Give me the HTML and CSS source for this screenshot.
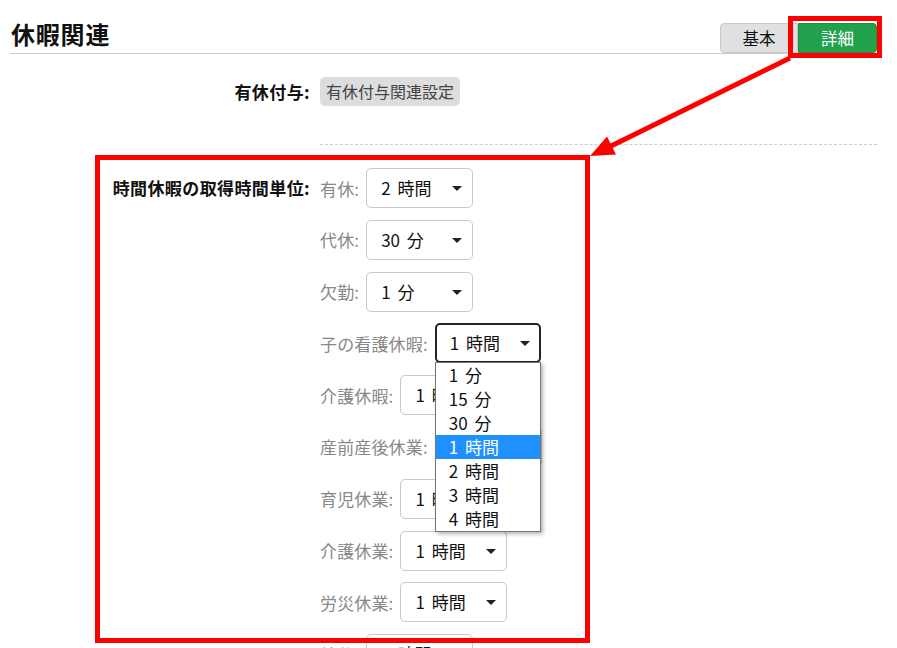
FILE: index.html
```html
<!DOCTYPE html>
<html>
	<head>
		<meta charset="UTF-8">
		<title>休暇関連</title>
		<link rel="stylesheet" href="styles.css">
	</head>
	<body>
	  <div class="page">
	    <div class="head">
	      <h1 class="title">休暇関連</h1>
	      <div class="tabs">
	        <span class="tab">基本</span>
	        <span class="tab on">詳細</span>
	      </div>
	    </div>

	    <div class="row first">
	      <div class="lbl">有休付与:</div>
	      <div class="cell"><span class="gbtn">有休付与関連設定</span></div>
	    </div>
	    <div class="sep"></div>

	    <div class="row">
	      <div class="lbl">時間休暇の取得時間単位:</div>
	      <div class="cell units">
	        <div class="unit"><span class="ulbl">有休:</span><div class="sel">2 時間</div></div>
	        <div class="unit"><span class="ulbl">代休:</span><div class="sel">30 分</div></div>
	        <div class="unit"><span class="ulbl">欠勤:</span><div class="sel">1 分</div></div>
	        <div class="unit">
	          <span class="ulbl">子の看護休暇:</span>
	          <div class="sel focus">1 時間
	            <ul class="drop">
	              <li>1 分</li>
	              <li>15 分</li>
	              <li>30 分</li>
	              <li class="on">1 時間</li>
	              <li>2 時間</li>
	              <li>3 時間</li>
	              <li>4 時間</li>
	            </ul>
	          </div>
	        </div>
	        <div class="unit"><span class="ulbl">介護休暇:</span><div class="sel">1 時間</div></div>
	        <div class="unit"><span class="ulbl">産前産後休業:</span><div class="sel">1 時間</div></div>
	        <div class="unit"><span class="ulbl">育児休業:</span><div class="sel">1 時間</div></div>
	        <div class="unit"><span class="ulbl">介護休業:</span><div class="sel">1 時間</div></div>
	        <div class="unit"><span class="ulbl">労災休業:</span><div class="sel">1 時間</div></div>
	        <div class="unit"><span class="ulbl">特休:</span><div class="sel">1 時間</div></div>
	      </div>
	    </div>
	  </div>

	  <!-- 注釈 -->
	  <div class="mark big"></div>
	  <div class="mark small"></div>
	  <svg class="arrow" width="897" height="648" viewBox="0 0 897 648">
	    <line x1="790" y1="58" x2="607" y2="148" stroke="#ff0000" stroke-width="5"/>
	    <polygon points="590,156 616,154.5 607,136.5" fill="#ff0000"/>
	  </svg>
	</body>
</html>
```

FILE: styles.css
```css
html,body{
  padding: 0;
  margin: 0;
  overflow: hidden;
  height: 648px;
}
body {
  position: relative;
  background: #fff;
  font-family: "Noto Sans CJK JP", "Noto Sans", sans-serif;
  font-size: 17px;
  color: #111;
}
.page {
  margin: 0 20px 0 10px;
}
.head {
  display: flex;
  justify-content: space-between;
  align-items: flex-end;
  padding-top: 20px;
  border-bottom: solid 1px #ccc;
}
.title {
  margin: 0 0 5px 1px;
  font-size: 24px;
  line-height: 28px;
  font-weight: bold;
  letter-spacing: 0.8px;
}
.tabs {
  display: flex;
}
.tab {
  box-sizing: border-box;
  width: 78px;
  height: 30px;
  line-height: 28px;
  text-align: center;
  font-size: 16.5px;
  background: #e0e0e0;
  border: solid 1px #c8c8c8;
  border-radius: 4px 0 0 4px;
}
.tab.on {
  width: 79px;
  color: #fff;
  background: #21a14c;
  border-color: #1c9142;
  border-radius: 0 4px 4px 0;
}
.row {
  display: grid;
  grid-template-columns: 300px 1fr;
  column-gap: 10px;
  margin-top: 23px;
}
.lbl {
  text-align: right;
  font-weight: bold;
  line-height: 40px;
  letter-spacing: 0.4px;
}
.first .lbl {
  line-height: 29px;
}
.gbtn {
  display: inline-block;
  padding: 0 6px;
  line-height: 29px;
  font-size: 16px;
  color: #444;
  background: #dddddd;
  border-radius: 5px;
}
.sep {
  margin: 38px 0 0 310px;
  border-top: dashed 1px #ccc;
}
.units {
  display: flex;
  flex-direction: column;
  gap: 11.8px;
}
.unit {
  display: flex;
  align-items: center;
  height: 40px;
}
.ulbl {
  color: #888;
  margin-right: 7px;
  letter-spacing: 0.15px;
}
.sel {
  position: relative;
  box-sizing: border-box;
  width: 107px;
  height: 40px;
  padding-left: 14px;
  line-height: 38px;
  word-spacing: 3px;
  border: solid 1px #c8c8c8;
  border-radius: 5px;
  background: #fff;
}
.sel::after {
  content: "";
  position: absolute;
  right: 10px;
  top: 17px;
  border-left: 5px solid transparent;
  border-right: 5px solid transparent;
  border-top: 5px solid #222;
}
.sel.focus {
  width: 106px;
  padding-left: 13px;
  line-height: 36px;
  border: solid 2px #222;
}
.sel.focus::after {
  top: 16px;
  right: 9px;
}
.drop {
  position: absolute;
  left: -2px;
  top: 37px;
  z-index: 2;
  box-sizing: border-box;
  width: 106px;
  margin: 0;
  padding: 0;
  list-style: none;
  background: #fff;
  border: solid 1px #767676;
  box-shadow: 2px 2px 4px rgba(0,0,0,0.3);
}
.drop li {
  height: 24px;
  line-height: 24px;
  padding-left: 13px;
  color: #111;
}
.drop li.on {
  background: #1e90ff;
  color: #fff;
}
.mark {
  position: absolute;
  box-sizing: border-box;
  border: solid 5px #ff0000;
  z-index: 3;
}
.big {
  left: 95px;
  top: 155px;
  width: 495px;
  height: 488px;
}
.small {
  left: 788px;
  top: 16px;
  width: 94px;
  height: 42px;
}
.arrow {
  position: absolute;
  left: 0;
  top: 0;
  z-index: 4;
}
```
